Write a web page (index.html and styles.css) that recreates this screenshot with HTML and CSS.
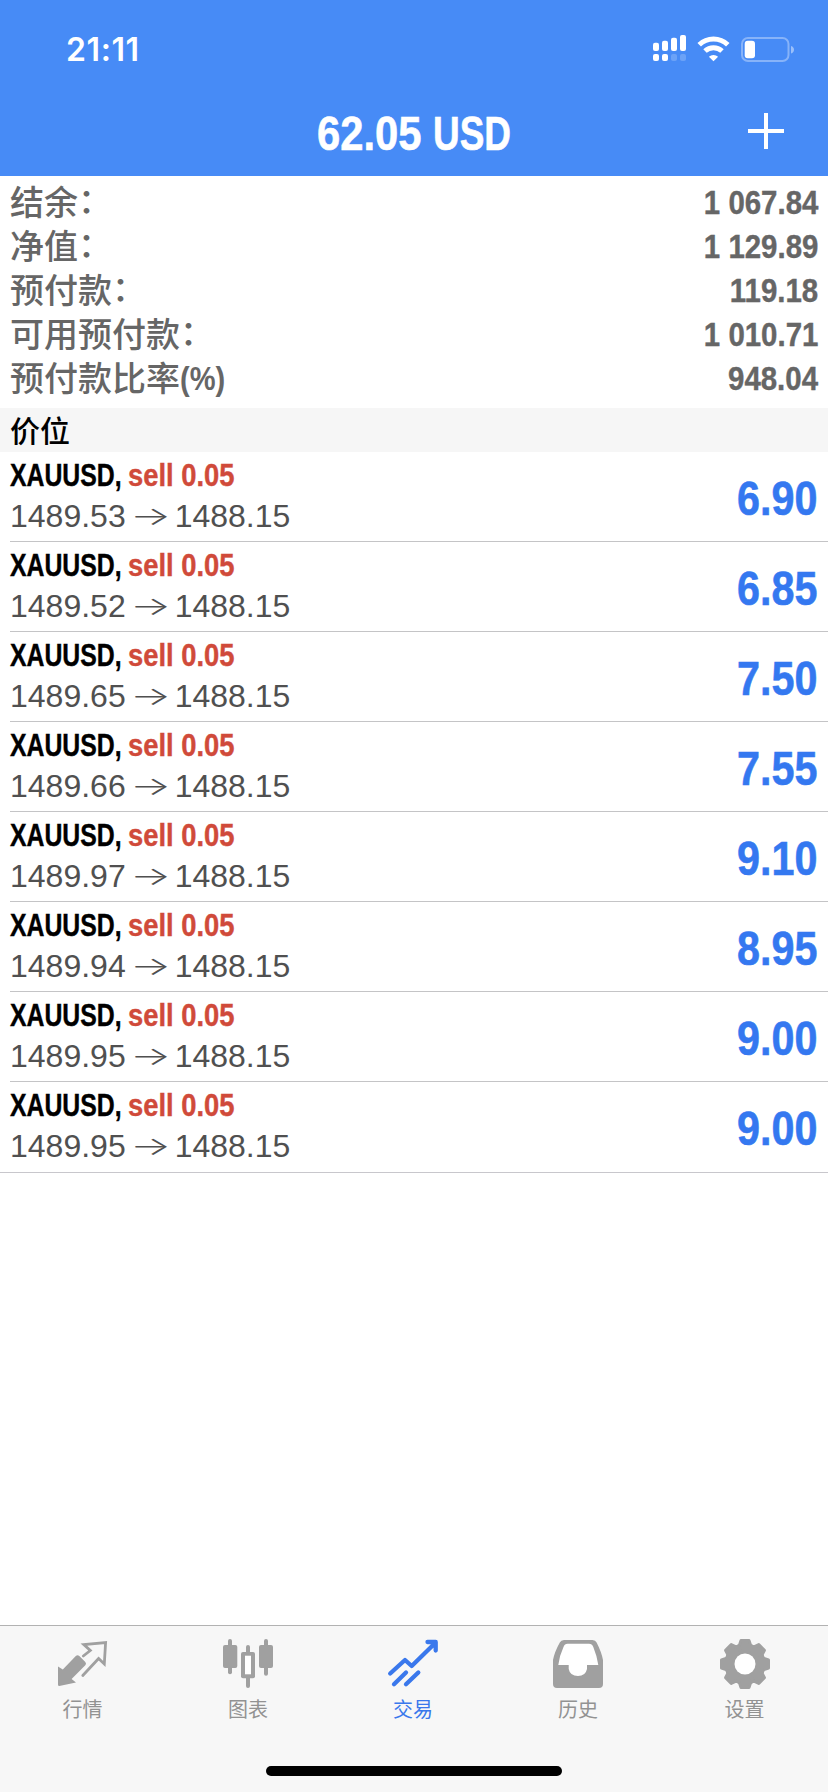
FILE: index.html
```html
<!DOCTYPE html>
<html lang="zh-CN">
<head>
<meta charset="utf-8">
<title>交易</title>
<link rel="stylesheet" href="styles.css">
</head>
<body>
<div class="app">
  <header class="header">
    <div class="status">
      <span class="time">21:11</span>
      <svg class="status-icons" width="142" height="28" viewBox="0 0 142 28" fill="#fff">
        <rect x="0" y="8.7" width="6" height="8.3" rx="2"/>
        <rect x="9" y="6.7" width="6" height="10.3" rx="2"/>
        <rect x="18" y="3.7" width="6" height="13.3" rx="2"/>
        <rect x="27" y="1" width="6" height="16" rx="2"/>
        <rect x="0" y="20" width="6" height="7" rx="2"/>
        <rect x="9" y="20" width="6" height="7" rx="2"/>
        <rect x="18" y="20" width="6" height="7" rx="2" opacity=".2"/>
        <rect x="27" y="20" width="6" height="7" rx="2" opacity=".2"/>
        <g fill="none" stroke="#fff" stroke-width="5">
          <path d="M46.200 10.800A20.500 20.500 0 0 1 74.800 10.800"/>
          <path d="M52 17A12.400 12.400 0 0 1 69 17"/>
        </g>
        <path d="M60.500 27.300L55.900 22.800A7 7 0 0 1 65.100 22.800Z"/>
        <rect x="89" y="4" width="46.500" height="23" rx="6" fill="none" stroke="#fff" stroke-width="2" opacity=".35"/>
        <rect x="91.700" y="6.700" width="10.300" height="17.600" rx="3"/>
        <path d="M138 12v7.500q3-1 3-3.750t-3-3.750z" opacity=".45"/>
      </svg>
    </div>
    <div class="nav">
      <h1 class="title"><span class="amount">62.05</span> <span class="currency">USD</span></h1>
      <svg class="plus" width="36" height="36" viewBox="0 0 36 36"><path d="M0 18H36M18 0V36" stroke="#fff" stroke-width="4"/></svg>
    </div>
  </header>

  <dl class="summary">
    <div class="line"><dt>结余<span class="colon">：</span></dt><dd>1 067.84</dd></div>
    <div class="line"><dt>净值<span class="colon">：</span></dt><dd>1 129.89</dd></div>
    <div class="line"><dt>预付款<span class="colon">：</span></dt><dd>119.18</dd></div>
    <div class="line"><dt>可用预付款<span class="colon">：</span></dt><dd>1 010.71</dd></div>
    <div class="line"><dt>预付款比率<span class="percent">(%)</span></dt><dd>948.04</dd></div>
  </dl>

  <h2 class="section">价位</h2>

  <ul class="positions">
    <li class="position"><div class="info"><div class="order"><span class="symbol">XAUUSD,</span><span class="side">sell 0.05</span></div><div class="prices"><span>1489.53</span><span class="arrow">→</span><span>1488.15</span></div></div><span class="profit">6.90</span></li>
    <li class="position"><div class="info"><div class="order"><span class="symbol">XAUUSD,</span><span class="side">sell 0.05</span></div><div class="prices"><span>1489.52</span><span class="arrow">→</span><span>1488.15</span></div></div><span class="profit">6.85</span></li>
    <li class="position"><div class="info"><div class="order"><span class="symbol">XAUUSD,</span><span class="side">sell 0.05</span></div><div class="prices"><span>1489.65</span><span class="arrow">→</span><span>1488.15</span></div></div><span class="profit">7.50</span></li>
    <li class="position"><div class="info"><div class="order"><span class="symbol">XAUUSD,</span><span class="side">sell 0.05</span></div><div class="prices"><span>1489.66</span><span class="arrow">→</span><span>1488.15</span></div></div><span class="profit">7.55</span></li>
    <li class="position"><div class="info"><div class="order"><span class="symbol">XAUUSD,</span><span class="side">sell 0.05</span></div><div class="prices"><span>1489.97</span><span class="arrow">→</span><span>1488.15</span></div></div><span class="profit">9.10</span></li>
    <li class="position"><div class="info"><div class="order"><span class="symbol">XAUUSD,</span><span class="side">sell 0.05</span></div><div class="prices"><span>1489.94</span><span class="arrow">→</span><span>1488.15</span></div></div><span class="profit">8.95</span></li>
    <li class="position"><div class="info"><div class="order"><span class="symbol">XAUUSD,</span><span class="side">sell 0.05</span></div><div class="prices"><span>1489.95</span><span class="arrow">→</span><span>1488.15</span></div></div><span class="profit">9.00</span></li>
    <li class="position"><div class="info"><div class="order"><span class="symbol">XAUUSD,</span><span class="side">sell 0.05</span></div><div class="prices"><span>1489.95</span><span class="arrow">→</span><span>1488.15</span></div></div><span class="profit">9.00</span></li>
  </ul>

  <footer class="footer">
    <nav class="tabs">
      <a class="tab">
        <svg class="icon" viewBox="0.7 0 50 50"><path d="M26 17L33 11.500L26.500 5.500L48.300 3.500L47 25L41.300 19.500L25.500 36.500" fill="none" stroke="currentColor" stroke-width="2.800" stroke-linecap="round"/><path d="M0.700 27.500L5.500 30.500L18.500 17Q20.300 15.300 22 17L28 23Q29.500 24.700 28 26.300L14.300 40L18.700 43.500L2 47Q0.700 47 0.700 45.500Z" fill="currentColor"/></svg>
        <span>行情</span>
      </a>
      <a class="tab">
        <svg class="icon" viewBox="0 0 50 50" fill="currentColor"><rect x="5" width="4" height="35.300" rx="2"/><rect y="6" width="14.300" height="23" rx="2"/><rect x="23" y="6" width="4" height="43" rx="2"/><rect x="18" y="13" width="14" height="26.300" rx="2"/><rect x="22" y="16.700" width="6" height="18.600" fill="#fff"/><rect x="41" width="4" height="36.700" rx="2"/><rect x="36" y="6" width="14" height="23" rx="2"/></svg>
        <span>图表</span>
      </a>
      <a class="tab active">
        <svg class="icon" viewBox="0 0 50 50" fill="none" stroke="currentColor" stroke-width="4.300" stroke-linecap="round" stroke-linejoin="round"><path d="M2.200 34.500L17 21L23.700 27L47.700 3.500M39.500 3H47.700V11.500M6 45.300L18 33.500M18 45.300L30.300 33.500"/></svg>
        <span>交易</span>
      </a>
      <a class="tab">
        <svg class="icon" viewBox="0 0 50 50"><path d="M11 1H39.500Q42.500 1 43.600 3.500Q48.500 13 50 21V45Q50 49 46 49H4Q0 49 0 45V21Q1.500 13 6.800 3.500Q8 1 11 1Z" fill="currentColor"/><path d="M14.500 4.700H36Q39 4.700 40.300 8Q44 17 45.300 26H34V30Q32.500 37 25 37Q17 37 15.700 30V26H5.300Q6.300 17 10.500 8Q11.700 4.700 14.500 4.700Z" fill="#fff"/></svg>
        <span>历史</span>
      </a>
      <a class="tab">
        <svg class="icon" viewBox="-25 -25 50 50"><defs><path id="tooth" d="M-8 -17L-5.500 -19L-4 -23.500H4L5.500 -19L8 -17L0 0Z"/></defs><g fill="currentColor" stroke="currentColor" stroke-width="3" stroke-linejoin="round"><circle r="17.500"/><use href="#tooth"/><use href="#tooth" transform="rotate(45)"/><use href="#tooth" transform="rotate(90)"/><use href="#tooth" transform="rotate(135)"/><use href="#tooth" transform="rotate(180)"/><use href="#tooth" transform="rotate(225)"/><use href="#tooth" transform="rotate(270)"/><use href="#tooth" transform="rotate(315)"/></g><circle r="10.500" fill="#fff"/></svg>
        <span>设置</span>
      </a>
    </nav>
    <div class="home"></div>
  </footer>
</div>
</body>
</html>
```
FILE: styles.css
```css
* { box-sizing: border-box; margin: 0; padding: 0; }

body {
  background: #fff;
  font-family: "Liberation Sans", "Noto Sans CJK SC", sans-serif;
}

.app { width: 828px; height: 1792px; display: flex; flex-direction: column; }

.header { height: 176px; background: #478bf6; color: #fff; flex: none; }
.status { height: 88px; display: flex; justify-content: space-between; padding: 34px 33px 0 66px; }
.time { font: 600 32px/32px Inter, sans-serif; letter-spacing: .6px; }
.status-icons { display: block; }
.nav { height: 88px; display: grid; grid-template-columns: 1fr 194px 1fr; padding-right: 44px; padding-left: 44px; }
.title { grid-column: 2; display: flex; justify-content: space-between; font-size: 48px; line-height: 92px; font-weight: 700; -webkit-text-stroke: .6px; }
.amount { width: 104px; transform: scaleX(.87); transform-origin: left; }
.currency { width: 78px; transform: scaleX(.77); transform-origin: left; }
.plus { justify-self: end; margin-top: 25px; }

.summary { height: 232px; padding: 4px 10px 0; color: #666; flex: none; }
.line { height: 44px; display: flex; justify-content: space-between; line-height: 42px; }
.line dt { font-family: "Noto Sans CJK SC", sans-serif; font-size: 34px; font-weight: 500; white-space: nowrap; }
.line dd { font-size: 34px; line-height: 44px; font-weight: 700; -webkit-text-stroke: .4px; transform: scaleX(.865); transform-origin: right; }
.colon { display: inline-block; transform: translateY(-2px); }
.percent { display: inline-block; font-family: "Liberation Sans", sans-serif; font-weight: 700; font-size: 33px; transform: translateY(-1px) scaleX(.88); transform-origin: left; }

.section { height: 44px; padding-left: 10px; background: #f6f6f6; color: #000; font: 500 30px/42px "Noto Sans CJK SC", sans-serif; flex: none; }

.positions { list-style: none; border-bottom: 1px solid #c8c7cc; flex: none; }
.position { height: 90px; margin-left: 10px; padding-right: 11px; display: flex; justify-content: space-between; border-bottom: 1px solid #c4c4c6; }
.info { padding-top: 3px; }
.order { display: flex; height: 41px; font-size: 32px; line-height: 40px; font-weight: 700; -webkit-text-stroke: .4px; }
.symbol { width: 118px; color: #000; transform: scaleX(.775); transform-origin: left; }
.side { color: #d04a3a; white-space: nowrap; transform: scaleX(.855); transform-origin: left; }
.position:last-child { border-bottom: 0; }
.prices { display: flex; height: 40px; font-size: 32px; line-height: 40px; color: #505050; }
.arrow { width: 49px; text-align: center; font-family: Inter, sans-serif; font-weight: 300; transform: scale(1.35, .8); }
.profit { font-size: 48px; line-height: 94px; font-weight: 700; color: #3478f0; -webkit-text-stroke: .6px; transform: scaleX(.86); transform-origin: right; }

.footer { height: 167px; margin-top: auto; background: #f7f7f7; border-top: 1px solid #b2b2b2; display: flex; flex-direction: column; align-items: center; justify-content: space-between; padding-bottom: 16px; }
.tabs { display: grid; grid-template-columns: 165px 166px 164px 166px 167px; padding-top: 13px; }
.tab { display: flex; flex-direction: column; align-items: center; color: #a0a0a0; }
.tab span { margin-top: 6px; font: 400 20px/28px "Noto Sans CJK SC", sans-serif; color: #929292; }
.tab.active, .tab.active span { color: #3a78ec; }
.icon { width: 50px; height: 50px; display: block; overflow: visible; }
.home { width: 296px; height: 10px; border-radius: 5px; background: #000; }
```
